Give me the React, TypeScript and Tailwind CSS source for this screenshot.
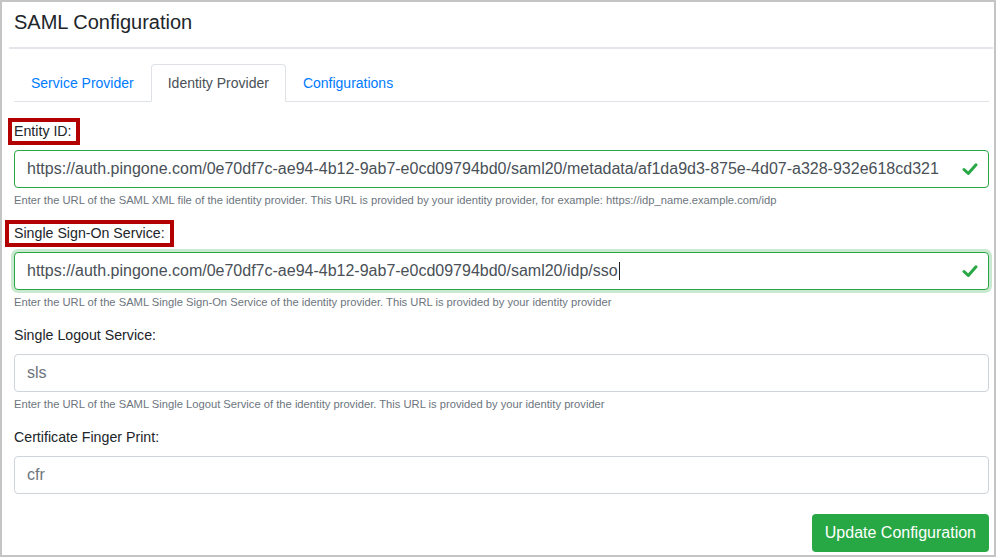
import React from 'react';

const ENTITY_ID =
  'https://auth.pingone.com/0e70df7c-ae94-4b12-9ab7-e0cd09794bd0/saml20/metadata/af1da9d3-875e-4d07-a328-932e618cd321';
const SSO_URL =
  'https://auth.pingone.com/0e70df7c-ae94-4b12-9ab7-e0cd09794bd0/saml20/idp/sso';

function Check() {
  return (
    <svg width="16" height="14" viewBox="0 0 16 14" className="mr-[10px] shrink-0">
      <polyline
        points="2,7.5 6.3,11.5 14,2.8"
        fill="none"
        stroke="#28a745"
        strokeWidth="3"
        strokeLinecap="round"
        strokeLinejoin="round"
      />
    </svg>
  );
}

type FieldProps = {
  label: string;
  value?: string;
  placeholder?: string;
  help?: string;
  highlight?: 'sm' | 'lg';
  valid?: boolean;
  focused?: boolean;
};

function Field({ label, value, placeholder, help, highlight, valid, focused }: FieldProps) {
  const labelCls =
    highlight === 'sm'
      ? '-ml-[6px] pl-[2px] pr-[4px] border-[#b20000]'
      : highlight === 'lg'
        ? '-ml-[9px] pl-[5px] pr-[5px] border-[#b20000]'
        : '-ml-[6px] pl-[2px] pr-[4px] border-transparent';

  return (
    <div className="mb-3">
      <div className="h-[27px]">
        <label
          className={`inline-block border-4 text-[14.2px] leading-[19px] text-[#212529] ${labelCls}`}
        >
          {label}
        </label>
      </div>
      <div
        className={`mt-[5px] flex h-[38px] items-center rounded border bg-white pl-3 text-[16px] ${
          valid ? 'border-[#28a745]' : 'border-[#ced4da]'
        } ${focused ? 'shadow-[0_0_0_3px_rgba(40,167,69,0.25)]' : ''}`}
      >
        <div className="flex min-w-0 flex-1 items-center whitespace-nowrap">
          {value ? (
            <span className="text-[#495057]">{value}</span>
          ) : (
            <span className="text-[#6c757d]">{placeholder}</span>
          )}
          {focused && <span className="ml-px inline-block h-[18px] w-px bg-[#222]" />}
        </div>
        {valid && <Check />}
      </div>
      {help && (
        <div className="mt-1 text-[11.2px] leading-[16px] text-[#6c757d]">{help}</div>
      )}
    </div>
  );
}

export default function App() {
  return (
    <div className="h-[558px] w-[996px] bg-white font-['Liberation_Sans',Arial,sans-serif]">
      <div className="flex h-[557px] flex-col border-2 border-[#c4c4c4]">
        <div className="h-[40px] pl-3 text-[20px] leading-[40px] text-[#212529]">
          SAML Configuration
        </div>
        <div className="ml-[7px] mr-px mt-[5px] h-[2px] bg-[#e3e6ea]" />

        <div className="pl-3 pr-[5px]">
          <nav className="mt-[15px] flex border-b border-[#dee2e6] text-[14px] leading-[20px]">
            <span className="-mb-px rounded-t border border-transparent px-4 py-2 text-[#007bff]">
              Service Provider
            </span>
            <span className="-mb-px rounded-t border border-[#dee2e6] border-b-white bg-white px-4 py-2 text-[#495057]">
              Identity Provider
            </span>
            <span className="-mb-px rounded-t border border-transparent px-4 py-2 text-[#007bff]">
              Configurations
            </span>
          </nav>

          <div className="pt-4">
            <Field
              label="Entity ID:"
              value={ENTITY_ID}
              highlight="sm"
              valid
              help="Enter the URL of the SAML XML file of the identity provider. This URL is provided by your identity provider, for example: https://idp_name.example.com/idp"
            />
            <Field
              label="Single Sign-On Service:"
              value={SSO_URL}
              highlight="lg"
              valid
              focused
              help="Enter the URL of the SAML Single Sign-On Service of the identity provider. This URL is provided by your identity provider"
            />
            <Field
              label="Single Logout Service:"
              placeholder="sls"
              help="Enter the URL of the SAML Single Logout Service of the identity provider. This URL is provided by your identity provider"
            />
            <Field label="Certificate Finger Print:" placeholder="cfr" />
          </div>

          <div className="-mt-3 flex justify-end pt-5">
            <button className="h-[38px] rounded bg-[#28a745] px-[13px] text-[16px] text-white">
              Update Configuration
            </button>
          </div>
        </div>
      </div>
    </div>
  );
}
